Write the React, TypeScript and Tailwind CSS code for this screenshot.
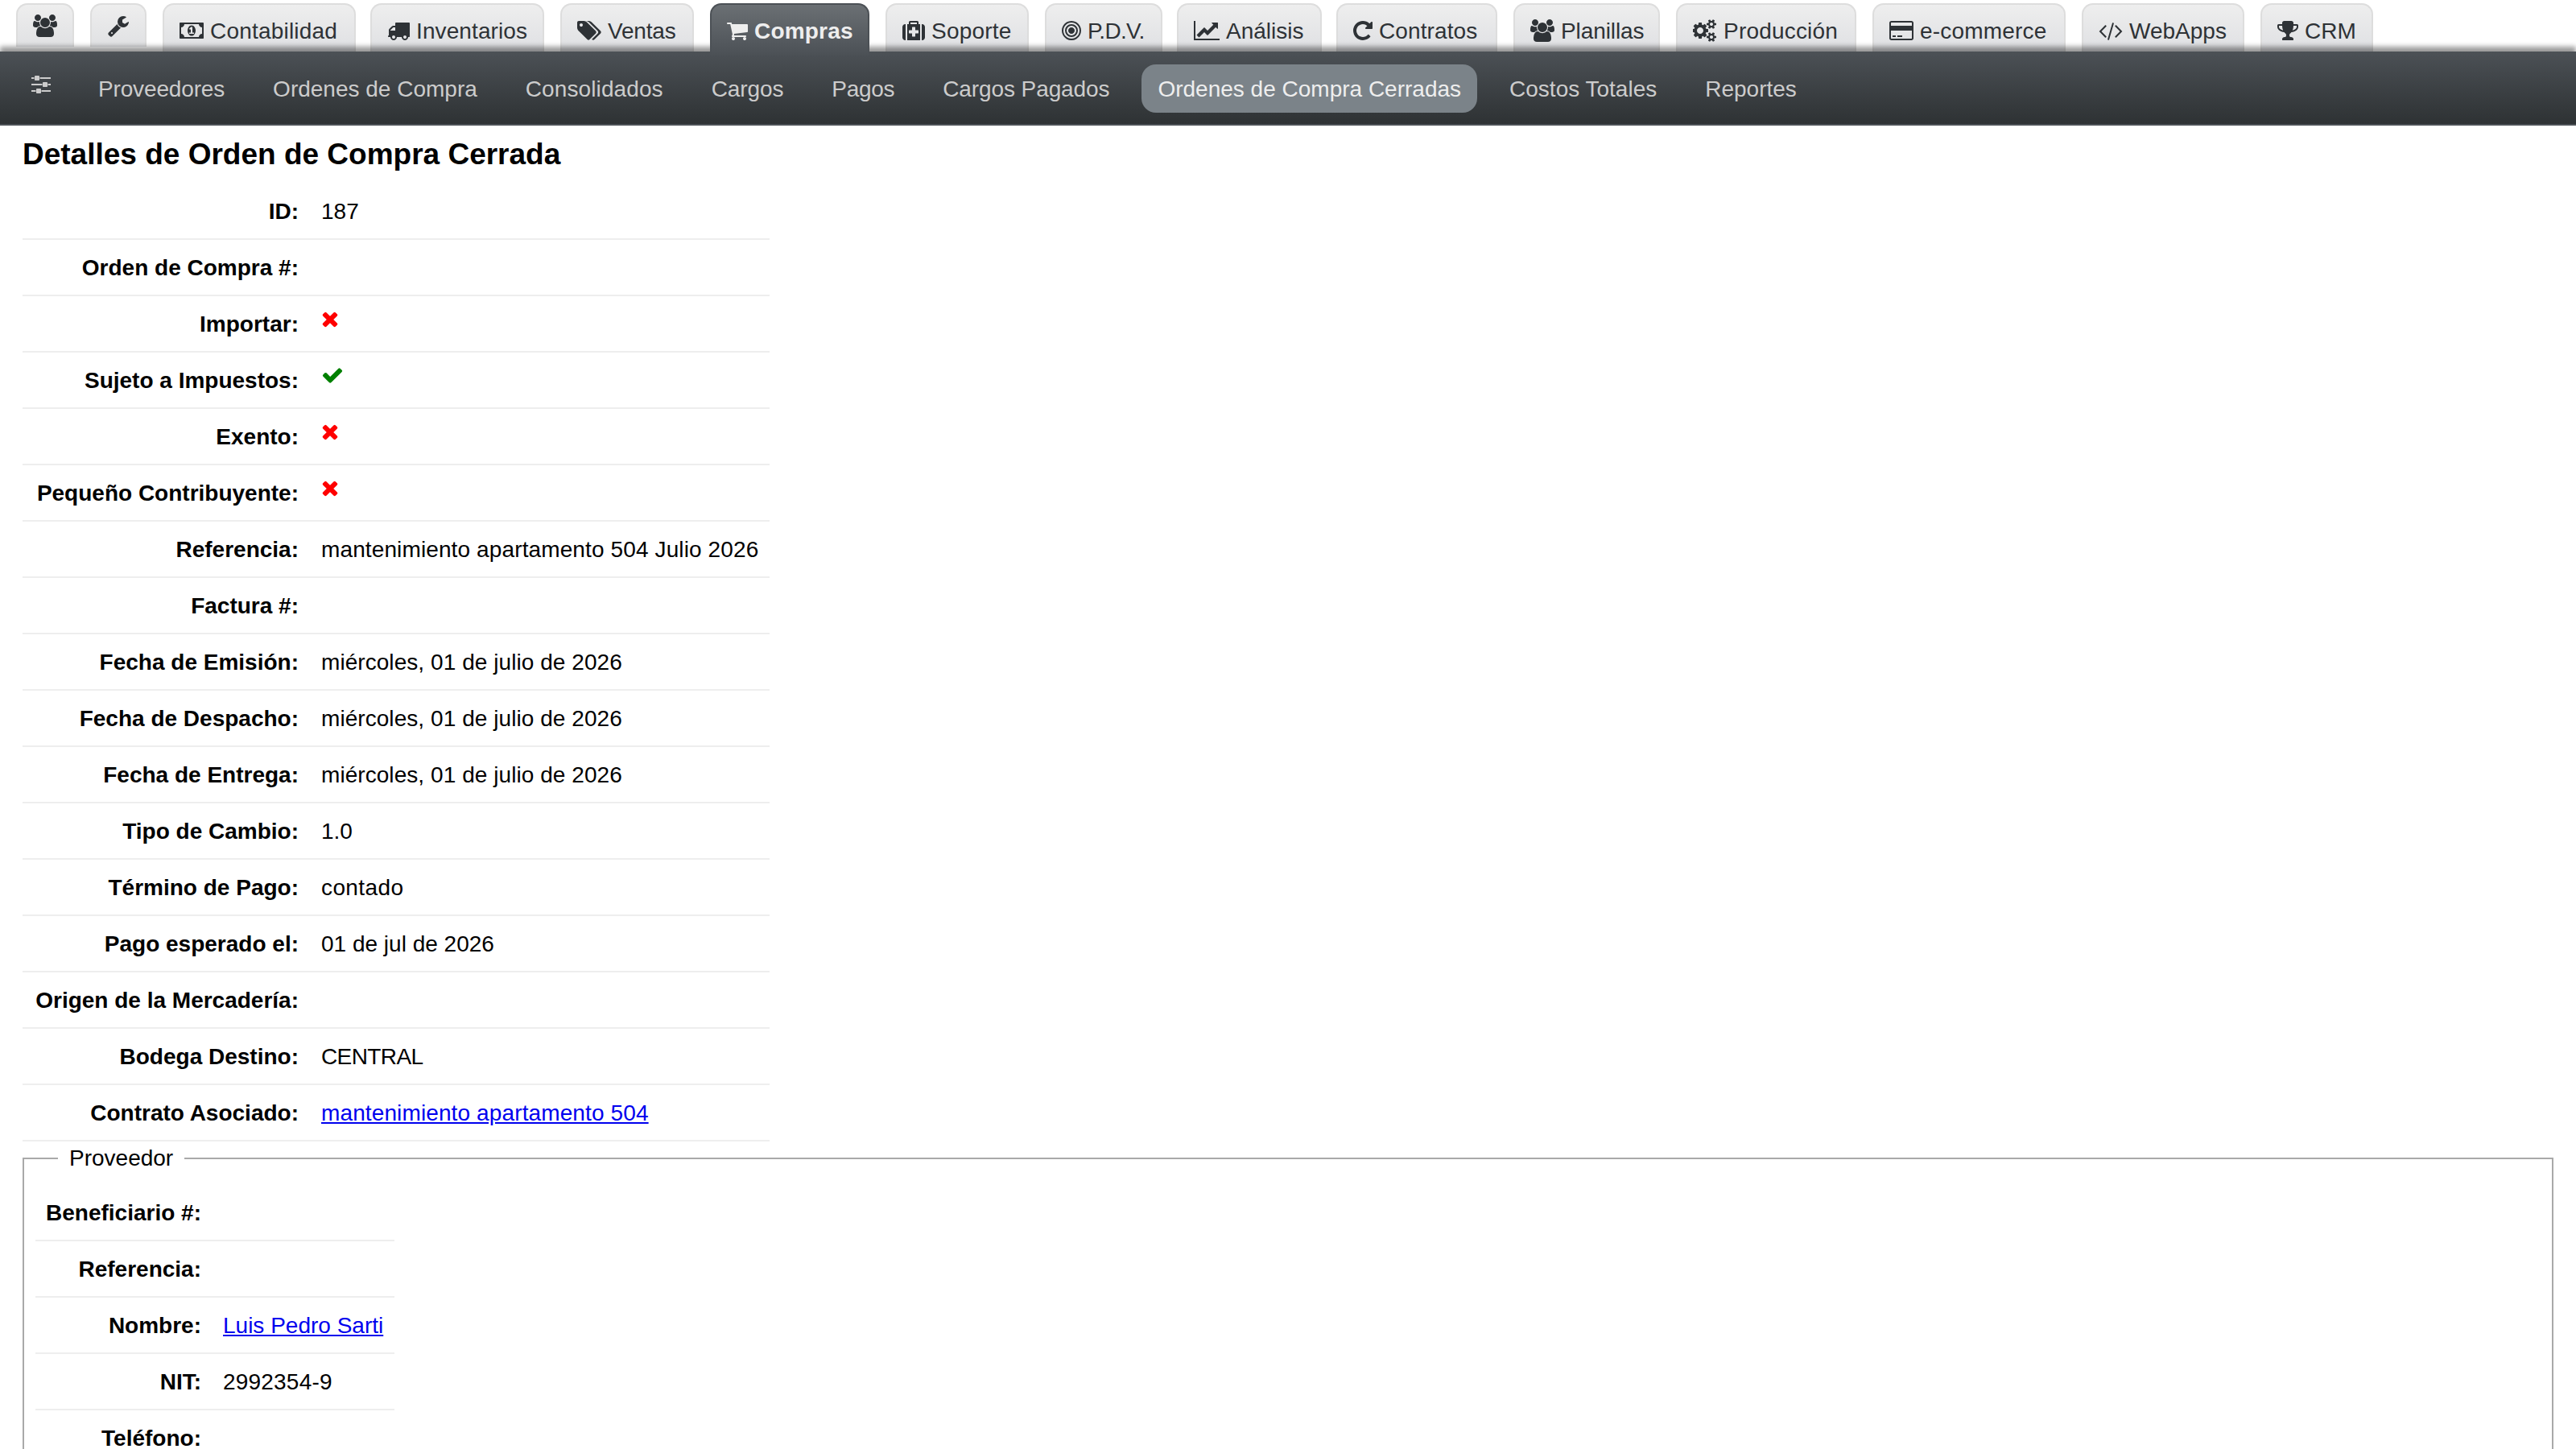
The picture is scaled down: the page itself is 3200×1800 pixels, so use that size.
import React from 'react';

type IconName = keyof typeof ICONS;

// [minX, width, path] on a 1792 unit high grid
const ICONS = {
  users: [0, 1920, 'M593 896q-162 5-265 128h-134q-82 0-138-40.5t-56-118.5q0-353 124-353 6 0 43.5 21t97.5 42.5 119 21.5q67 0 133-23-5 37-5 66 0 139 81 256zm1071 637q0 120-73 189.5t-194 69.5h-874q-121 0-194-69.5t-73-189.5q0-53 3.5-103.5t14-109 26.5-108.5 43-97.5 62-81 85.5-53.5 111.5-20q10 0 43 21.5t73 48 107 48 135 21.5 135-21.5 107-48 73-48 43-21.5q61 0 111.5 20t85.5 53.5 62 81 43 97.5 26.5 108.5 14 109 3.5 103.5zm-1024-1277q0 106-75 181t-181 75-181-75-75-181 75-181 181-75 181 75 75 181zm704 384q0 159-112.5 271.5t-271.5 112.5-271.5-112.5-112.5-271.5 112.5-271.5 271.5-112.5 271.5 112.5 112.5 271.5zm576 225q0 78-56 118.5t-138 40.5h-134q-103-123-265-128 81-117 81-256 0-29-5-66 66 23 133 23 59 0 119-21.5t97.5-42.5 43.5-21q124 0 124 353zm-128-609q0 106-75 181t-181 75-181-75-75-181 75-181 181-75 181 75 75 181z'],
  wrench: [64, 1664, 'M448 1472q0-26-19-45t-45-19-45 19-19 45 19 45 45 19 45-19 19-45zm644-420l-682 682q-37 37-90 37-52 0-91-37l-106-108q-38-36-38-90 0-53 38-91l681-681q39 98 114.5 173.5t173.5 114.5zm634-435q0 39-23 106-47 134-164.5 217.5t-258.5 83.5q-185 0-316.5-131.5t-131.5-316.5 131.5-316.5 316.5-131.5q58 0 121.5 16.5t107.5 46.5q16 11 16 28t-16 28l-293 169v224l193 107q5-3 79-48.5t135.5-81 70.5-35.5q15 0 23.5 10t8.5 25z'],
  money: [0, 1920, 'M768 1152h384v-96h-128v-448h-114l-148 137 77 80q42-37 55-57h2v288h-128v96zm512-256q0 70-21 142t-59.5 134-101.5 101-138 39-138-39-101.5-101-59.5-134-21-142 21-142 59.5-134 101.5-101 138-39 138 39 101.5 101 59.5 134 21 142zm512 256v-512q-106 0-181-75t-75-181h-1152q0 106-75 181t-181 75v512q106 0 181 75t75 181h1152q0-106 75-181t181-75zm128-832v1152q0 26-19 45t-45 19h-1792q-26 0-45-19t-19-45v-1152q0-26 19-45t45-19h1792q26 0 45 19t19 45z'],
  truck: [0, 1792, 'M640 1408q0-52-38-90t-90-38-90 38-38 90 38 90 90 38 90-38 38-90zm-384-512h384v-256h-158q-13 0-22 9l-195 195q-9 9-9 22v30zm1280 512q0-52-38-90t-90-38-90 38-38 90 38 90 90 38 90-38 38-90zm256-1088v1024q0 15-4 26.5t-13.5 18.5-16.5 11.5-23.5 6-22.5 2-25.5 0-22.5-.5q0 106-75 181t-181 75-181-75-75-181h-384q0 106-75 181t-181 75-181-75-75-181h-64q-3 0-22.5.5t-25.5 0-22.5-2-23.5-6-16.5-11.5-13.5-18.5-4-26.5q0-26 19-45t45-19v-320q0-8-.5-35t0-38 2.5-34.5 6.5-37 14-30.5 22.5-30l198-198q19-19 50.5-32t58.5-13h160v-192q0-26 19-45t45-19h1024q26 0 45 19t19 45z'],
  tags: [0, 1920, 'M448 448q0-53-37.5-90.5t-90.5-37.5-90.5 37.5-37.5 90.5 37.5 90.5 90.5 37.5 90.5-37.5 37.5-90.5zm1067 576q0 53-37 90l-491 492q-39 37-91 37-53 0-90-37l-715-716q-38-37-64.5-101t-26.5-117v-416q0-52 38-90t90-38h416q53 0 117 26.5t102 64.5l715 714q37 39 37 91zm384 0q0 53-37 90l-491 492q-39 37-91 37-36 0-59-14t-53-45l470-470q37-37 37-90 0-52-37-91l-715-714q-38-38-102-64.5t-117-26.5h224q53 0 117 26.5t102 64.5l715 714q37 39 37 91z'],
  cart: [64, 1664, 'M704 1536q0 52-38 90t-90 38-90-38-38-90 38-90 90-38 90 38 38 90zm896 0q0 52-38 90t-90 38-90-38-38-90 38-90 90-38 90 38 38 90zm128-1088v512q0 24-16.5 42.5t-40.5 21.5l-1044 122q13 60 13 70 0 16-24 64h920q26 0 45 19t19 45-19 45-45 19h-1024q-26 0-45-19t-19-45q0-11 8-31.5t16-36 21.5-40 15.5-29.5l-177-823h-204q-26 0-45-19t-19-45 19-45 45-19h256q16 0 28.5 6.5t19.5 15.5 13 24.5 8 26 5.5 29.5 4.5 26h1201q26 0 45 19t19 45z'],
  medkit: [0, 1792, 'M1280 1088v-192q0-14-9-23t-23-9h-224v-224q0-14-9-23t-23-9h-192q-14 0-23 9t-9 23v224h-224q-14 0-23 9t-9 23v192q0 14 9 23t23 9h224v224q0 14 9 23t23 9h192q14 0 23-9t9-23v-224h224q14 0 23-9t9-23zm-640-704h512v-128h-512v128zm-384 0v1280h-32q-92 0-158-66t-66-158v-832q0-92 66-158t158-66h32zm1152 0v1280h-1024v-1280h128v-160q0-40 28-68t68-28h576q40 0 68 28t28 68v160h128zm384 224v832q0 92-66 158t-158 66h-32v-1280h32q92 0 158 66t66 158z'],
  bullseye: [128, 1536, 'M1152 896q0 106-75 181t-181 75-181-75-75-181 75-181 181-75 181 75 75 181zm128 0q0-159-112.5-271.5t-271.5-112.5-271.5 112.5-112.5 271.5 112.5 271.5 271.5 112.5 271.5-112.5 112.5-271.5zm128 0q0 212-150 362t-362 150-362-150-150-362 150-362 362-150 362 150 150 362zm128 0q0-130-51-248.5t-136.5-204-204-136.5-248.5-51-248.5 51-204 136.5-136.5 204-51 248.5 51 248.5 136.5 204 204 136.5 248.5 51 248.5-51 204-136.5 136.5-204 51-248.5zm128 0q0 209-103 385.5t-279.5 279.5-385.5 103-385.5-103-279.5-279.5-103-385.5 103-385.5 279.5-279.5 385.5-103 385.5 103 279.5 279.5 103 385.5z'],
  chart: [-128, 2048, 'M1920 1536v128h-2048v-1536h128v1408h1920zm-128-1248v435q0 21-19.5 29.5t-35.5-7.5l-121-121-633 633q-10 10-23 10t-23-10l-233-233-416 416-192-192 585-585q10-10 23-10t23 10l233 233 464-464-121-121q-16-16-7.5-35.5t29.5-19.5h435q14 0 23 9t9 23z'],
  repeat: [128, 1536, 'M1664 256v448q0 26-19 45t-45 19h-448q-42 0-59-40-17-39 14-69l138-138q-148-137-349-137-104 0-198.5 40.5t-163.5 109.5-109.5 163.5-40.5 198.5 40.5 198.5 109.5 163.5 163.5 109.5 198.5 40.5q119 0 225-52t179-147q7-10 23-12 15 0 25 9l137 138q9 8 9.5 20.5t-7.5 22.5q-109 132-264 204.5t-327 72.5q-156 0-298-61t-245-164-164-245-61-298 61-298 164-245 245-164 298-61q147 0 284.5 55.5t244.5 156.5l130-129q29-31 70-14 39 17 39 59z'],
  cogs: [0, 1920, 'M832 896q0-106-75-181t-181-75-181 75-75 181 75 181 181 75 181-75 75-181zm768 512q0-52-38-90t-90-38-90 38-38 90q0 53 37.5 90.5t90.5 37.5 90.5-37.5 37.5-90.5zm0-1024q0-52-38-90t-90-38-90 38-38 90q0 53 37.5 90.5t90.5 37.5 90.5-37.5 37.5-90.5zm-384 421v185q0 10-7 19.5t-16 10.5l-155 24q-11 35-32 76 34 48 90 115 7 11 7 20 0 12-7 19-23 30-82.5 89.5t-78.5 59.5q-11 0-21-7l-115-90q-37 19-77 31-11 108-23 155-7 24-30 24h-186q-11 0-20-7.5t-10-17.5l-23-153q-34-10-75-31l-118 89q-7 7-20 7-11 0-21-8-144-133-144-160 0-9 7-19 10-14 41-53t47-61q-23-44-35-82l-152-24q-10-1-17-9.5t-7-19.5v-185q0-10 7-19.5t16-10.5l155-24q11-35 32-76-34-48-90-115-7-11-7-20 0-12 7-20 22-30 82-89t79-59q11 0 21 7l115 90q34-18 77-32 11-108 23-154 7-24 30-24h186q11 0 20 7.5t10 17.5l23 153q34 10 75 31l118-89q8-7 20-7 11 0 21 8 144 133 144 160 0 8-7 19-12 16-42 54t-45 60q23 48 34 82l152 23q10 2 17 10.5t7 19.5zm640 533v140q0 16-149 31-12 27-30 52 51 113 51 138 0 4-4 7-122 71-124 71-8 0-46-47t-52-68q-20 2-30 2t-30-2q-14 21-52 68t-46 47q-2 0-124-71-4-3-4-7 0-25 51-138-18-25-30-52-149-15-149-31v-140q0-16 149-31 13-29 30-52-51-113-51-138 0-4 4-7 4-2 35-20t59-34 30-16q8 0 46 46.5t52 67.5q20-2 30-2t30 2q51-71 92-112l6-2q4 0 124 70 4 3 4 7 0 25-51 138 17 23 30 52 149 15 149 31zm0-1024v140q0 16-149 31-12 27-30 52 51 113 51 138 0 4-4 7-122 71-124 71-8 0-46-47t-52-68q-20 2-30 2t-30-2q-14 21-52 68t-46 47q-2 0-124-71-4-3-4-7 0-25 51-138-18-25-30-52-149-15-149-31v-140q0-16 149-31 13-29 30-52-51-113-51-138 0-4 4-7 4-2 35-20t59-34 30-16q8 0 46 46.5t52 67.5q20-2 30-2t30 2q51-71 92-112l6-2q4 0 124 70 4 3 4 7 0 25-51 138 17 23 30 52 149 15 149 31z'],
  card: [0, 1920, 'M1760 128q66 0 113 47t47 113v1216q0 66-47 113t-113 47h-1600q-66 0-113-47t-47-113v-1216q0-66 47-113t113-47h1600zm-1600 128q-13 0-22.5 9.5t-9.5 22.5v224h1664v-224q0-13-9.5-22.5t-22.5-9.5h-1600zm1600 1280q13 0 22.5-9.5t9.5-22.5v-608h-1664v608q0 13 9.5 22.5t22.5 9.5h1600zm-1504-128v-128h256v128h-256zm384 0v-128h384v128h-384z'],
  code: [0, 1920, 'M617 1399l-50 50q-10 10-23 10t-23-10l-466-466q-10-10-10-23t10-23l466-466q10-10 23-10t23 10l50 50q10 10 10 23t-10 23l-393 393 393 393q10 10 10 23t-10 23zm591-1067l-373 1291q-4 13-15.5 19.5t-23.5 2.5l-62-17q-13-4-19.5-15.5t-2.5-24.5l373-1291q4-13 15.5-19.5t23.5-2.5l62 17q13 4 19.5 15.5t2.5 24.5zm657 651l-466 466q-10 10-23 10t-23-10l-50-50q-10-10-10-23t10-23l393-393-393-393q-10-10-10-23t10-23l50-50q10-10 23-10t23 10l466 466q10 10 10 23t-10 23z'],
  trophy: [64, 1664, 'M522 883q-74-162-74-371h-256v96q0 78 94.5 162t235.5 113zm1078-275v-96h-256q0 209-74 371 141-29 235.5-113t94.5-162zm128-128v128q0 71-41.5 143t-112 130-173 97.5-215.5 44.5q-42 54-95 95-38 34-52.5 72.5t-14.5 89.5q0 54 30.5 91t97.5 37q75 0 133.5 45.5t58.5 114.5v64q0 14-9 23t-23 9h-832q-14 0-23-9t-9-23v-64q0-69 58.5-114.5t133.5-45.5q67 0 97.5-37t30.5-91q0-51-14.5-89.5t-52.5-72.5q-53-41-95-95-113-5-215.5-44.5t-173-97.5-112-130-41.5-143v-128q0-40 28-68t68-28h288v-96q0-66 47-113t113-47h576q66 0 113 47t47 113v96h288q40 0 68 28t28 68z'],
  sliders: [0, 1536, 'M352 1408v128h-352v-128h352zm352-128q26 0 45 19t19 45v256q0 26-19 45t-45 19h-256q-26 0-45-19t-19-45v-256q0-26 19-45t45-19h256zm160-384v128h-864v-128h864zm-640-512v128h-224v-128h224zm1312 1024v128h-736v-128h736zm-960-1152q26 0 45 19t19 45v256q0 26-19 45t-45 19h-256q-26 0-45-19t-19-45v-256q0-26 19-45t45-19h256zm640 512q26 0 45 19t19 45v256q0 26-19 45t-45 19h-256q-26 0-45-19t-19-45v-256q0-26 19-45t45-19h256zm320 128v128h-224v-128h224zm0-512v128h-864v-128h864z'],
  times: [192, 1408, 'M1490 1322q0 40-28 68l-136 136q-28 28-68 28t-68-28l-294-294-294 294q-28 28-68 28t-68-28l-136-136q-28-28-28-68t28-68l294-294-294-294q-28-28-28-68t28-68l136-136q28-28 68-28t68 28l294 294 294-294q28-28 68-28t68 28l136 136q28 28 28 68t-28 68l-294 294 294 294q28 28 28 68z'],
  check: [0, 1792, 'M1671 566q0 40-28 68l-724 724-136 136q-28 28-68 28t-68-28l-136-136-362-362q-28-28-28-68t28-68l136-136q28-28 68-28t68 28l294 295 656-657q28-28 68-28t68 28l136 136q28 28 28 68z'],
} satisfies Record<string, [number, number, string]>;

const Icon = ({ name, className = '' }: { name: IconName; className?: string }) => {
  const [x, width, d] = ICONS[name];
  return (
    <svg viewBox={`${x} 0 ${width} 1792`} className={`h-7 shrink-0 fill-current ${className}`} style={{ width: width / 64 }}>
      <path d={d} />
    </svg>
  );
};

const TABS: { icon: IconName; label: string; className: string; active?: boolean }[] = [
  { icon: 'money', label: 'Contabilidad', className: 'w-[240px] -mr-0.5 tracking-[0.2px]' },
  { icon: 'truck', label: 'Inventarios', className: 'w-[216px] tracking-[0.1px]' },
  { icon: 'tags', label: 'Ventas', className: 'w-[166px] tracking-[-0.2px]' },
  { icon: 'cart', label: 'Compras', className: 'w-[198px] tracking-[0.2px]', active: true },
  { icon: 'medkit', label: 'Soporte', className: 'w-[178px] tracking-[0.2px]' },
  { icon: 'bullseye', label: 'P.D.V.', className: 'w-[146px] -mr-0.5 tracking-[-0.7px]' },
  { icon: 'chart', label: 'Análisis', className: 'w-[180px] -mr-0.5' },
  { icon: 'repeat', label: 'Contratos', className: 'w-[200px] tracking-[0.1px]' },
  { icon: 'users', label: 'Planillas', className: 'w-[182px] tracking-[-0.1px]' },
  { icon: 'cogs', label: 'Producción', className: 'w-[224px] tracking-[0.2px]' },
  { icon: 'card', label: 'e-commerce', className: 'w-[240px] tracking-[0.2px]' },
  { icon: 'code', label: 'WebApps', className: 'w-[202px]' },
  { icon: 'trophy', label: 'CRM', className: 'w-[140px]' },
];

const SUBTABS: { label: string; className: string; active?: boolean }[] = [
  { label: 'Proveedores', className: 'tracking-[-0.15px]' },
  { label: 'Ordenes de Compra', className: '' },
  { label: 'Consolidados', className: 'tracking-[0.1px]' },
  { label: 'Cargos', className: 'tracking-[-0.1px]' },
  { label: 'Pagos', className: 'tracking-[-0.3px]' },
  { label: 'Cargos Pagados', className: 'tracking-[-0.1px]' },
  { label: 'Ordenes de Compra Cerradas', className: '', active: true },
  { label: 'Costos Totales', className: '' },
  { label: 'Reportes', className: '' },
];

type Field = { label: string; value?: React.ReactNode; className?: string };

const Link = ({ children }: { children: React.ReactNode }) => (
  <a href="#" className="text-[#0000ee] underline">{children}</a>
);

const No = () => <Icon name="times" className="text-[#ff0000]" />;
const Yes = () => <Icon name="check" className="text-[#008000]" />;

const ORDER: Field[] = [
  { label: 'ID', value: '187' },
  { label: 'Orden de Compra #' },
  { label: 'Importar', value: <No /> },
  { label: 'Sujeto a Impuestos', value: <Yes /> },
  { label: 'Exento', value: <No /> },
  { label: 'Pequeño Contribuyente', value: <No /> },
  { label: 'Referencia', value: 'mantenimiento apartamento 504 Julio 2026', className: 'tracking-[0.12px]' },
  { label: 'Factura #' },
  { label: 'Fecha de Emisión', value: 'miércoles, 01 de julio de 2026', className: 'tracking-[0.06px]' },
  { label: 'Fecha de Despacho', value: 'miércoles, 01 de julio de 2026', className: 'tracking-[0.06px]' },
  { label: 'Fecha de Entrega', value: 'miércoles, 01 de julio de 2026', className: 'tracking-[0.06px]' },
  { label: 'Tipo de Cambio', value: '1.0' },
  { label: 'Término de Pago', value: 'contado', className: 'tracking-[0.4px]' },
  { label: 'Pago esperado el', value: '01 de jul de 2026' },
  { label: 'Origen de la Mercadería' },
  { label: 'Bodega Destino', value: 'CENTRAL', className: 'tracking-[-0.6px]' },
  { label: 'Contrato Asociado', value: <Link>mantenimiento apartamento 504</Link>, className: 'tracking-[0.12px]' },
];

const SUPPLIER: Field[] = [
  { label: 'Beneficiario #' },
  { label: 'Referencia' },
  { label: 'Nombre', value: <Link>Luis Pedro Sarti</Link> },
  { label: 'NIT', value: '2992354-9', className: 'tracking-[0.2px]' },
  { label: 'Teléfono' },
];

const FieldList = ({ fields, className, labelClass }: { fields: Field[]; className: string; labelClass: string }) => (
  <dl className={className}>
    {fields.map((field) => (
      <div key={field.label} className="flex h-[70px] border-b-2 border-[#eeeeee] pt-3.5 leading-[42px]">
        <dt className={`shrink-0 text-right font-bold ${labelClass}`}>{field.label}:</dt>
        <dd className={`pl-3.5 ${field.className ?? ''}`}>{field.value}</dd>
      </div>
    ))}
  </dl>
);

const App: React.FC = () => {
  return (
    <div className="h-[1800px] overflow-hidden bg-white font-['Liberation_Sans',Arial,sans-serif] text-[28px] text-black whitespace-nowrap">
      <header>
        <div className="flex h-16 items-start gap-5 pl-5 pt-1 text-[#2e3236]">
          <div className="flex h-[54px] w-[72px] justify-center rounded-t-[14px] border-2 border-b-0 border-[#dddddd] bg-linear-to-b from-[#eeeeee] to-[#e0e1e3] pt-3">
            <Icon name="users" />
          </div>
          <div className="flex h-[54px] w-[70px] justify-center rounded-t-[14px] border-2 border-b-0 border-[#dddddd] bg-linear-to-b from-[#eeeeee] to-[#e0e1e3] pt-3">
            <Icon name="wrench" />
          </div>
          {TABS.map((tab) => (
            <div
              key={tab.label}
              className={`flex shrink-0 items-start gap-2 rounded-t-[14px] border-2 border-b-0 pl-[19px] pt-4 leading-[34px] ${tab.className} ${
                tab.active
                  ? 'relative z-10 h-16 border-[#4c5156] bg-linear-to-b from-[#6b7074] to-[#4c5156] font-bold text-[#eeeeee]'
                  : 'h-[60px] border-[#dddddd] bg-linear-to-b from-[#eeeeee] to-[#dfe0e3]'
              }`}
            >
              <Icon name={tab.icon} className="mt-0.5" />
              {tab.label}
            </div>
          ))}
        </div>

        <nav className="relative flex h-[92px] items-start gap-5 border-b-2 border-[#4c5156] bg-linear-to-b from-[#4c5156] to-[#2e3234] pl-[18px] pt-4 leading-[62px] text-[#cccccc] shadow-[0_-6px_6px_rgba(0,0,0,0.4)]">
          <div className="pl-[21px] pr-[19px] pt-2.5">
            <Icon name="sliders" />
          </div>
          {SUBTABS.map((tab) => (
            <a
              key={tab.label}
              href="#"
              className={`h-[60px] px-5 ${tab.className} ${tab.active ? 'rounded-[18px] bg-[#7b8389] text-[#eeeeee]' : ''}`}
            >
              {tab.label}
            </a>
          ))}
        </nav>
      </header>

      <main className="px-7">
        <h1 className="h-[72px] pt-3.5 text-[37px] leading-[44px] font-bold">Detalles de Orden de Compra Cerrada</h1>
        <FieldList fields={ORDER} className="w-[928px]" labelClass="w-[357px] pr-3.5" />

        <fieldset className="mt-1 h-[500px] border-2 border-[#a9a9a9] px-3.5 pt-4">
          <legend className="ml-7 h-[34px] px-3.5 leading-[34px]">Proveedor</legend>
          <FieldList fields={SUPPLIER} className="w-[446px]" labelClass="w-[219px] pr-[13px]" />
        </fieldset>
      </main>
    </div>
  );
};

export default App;
